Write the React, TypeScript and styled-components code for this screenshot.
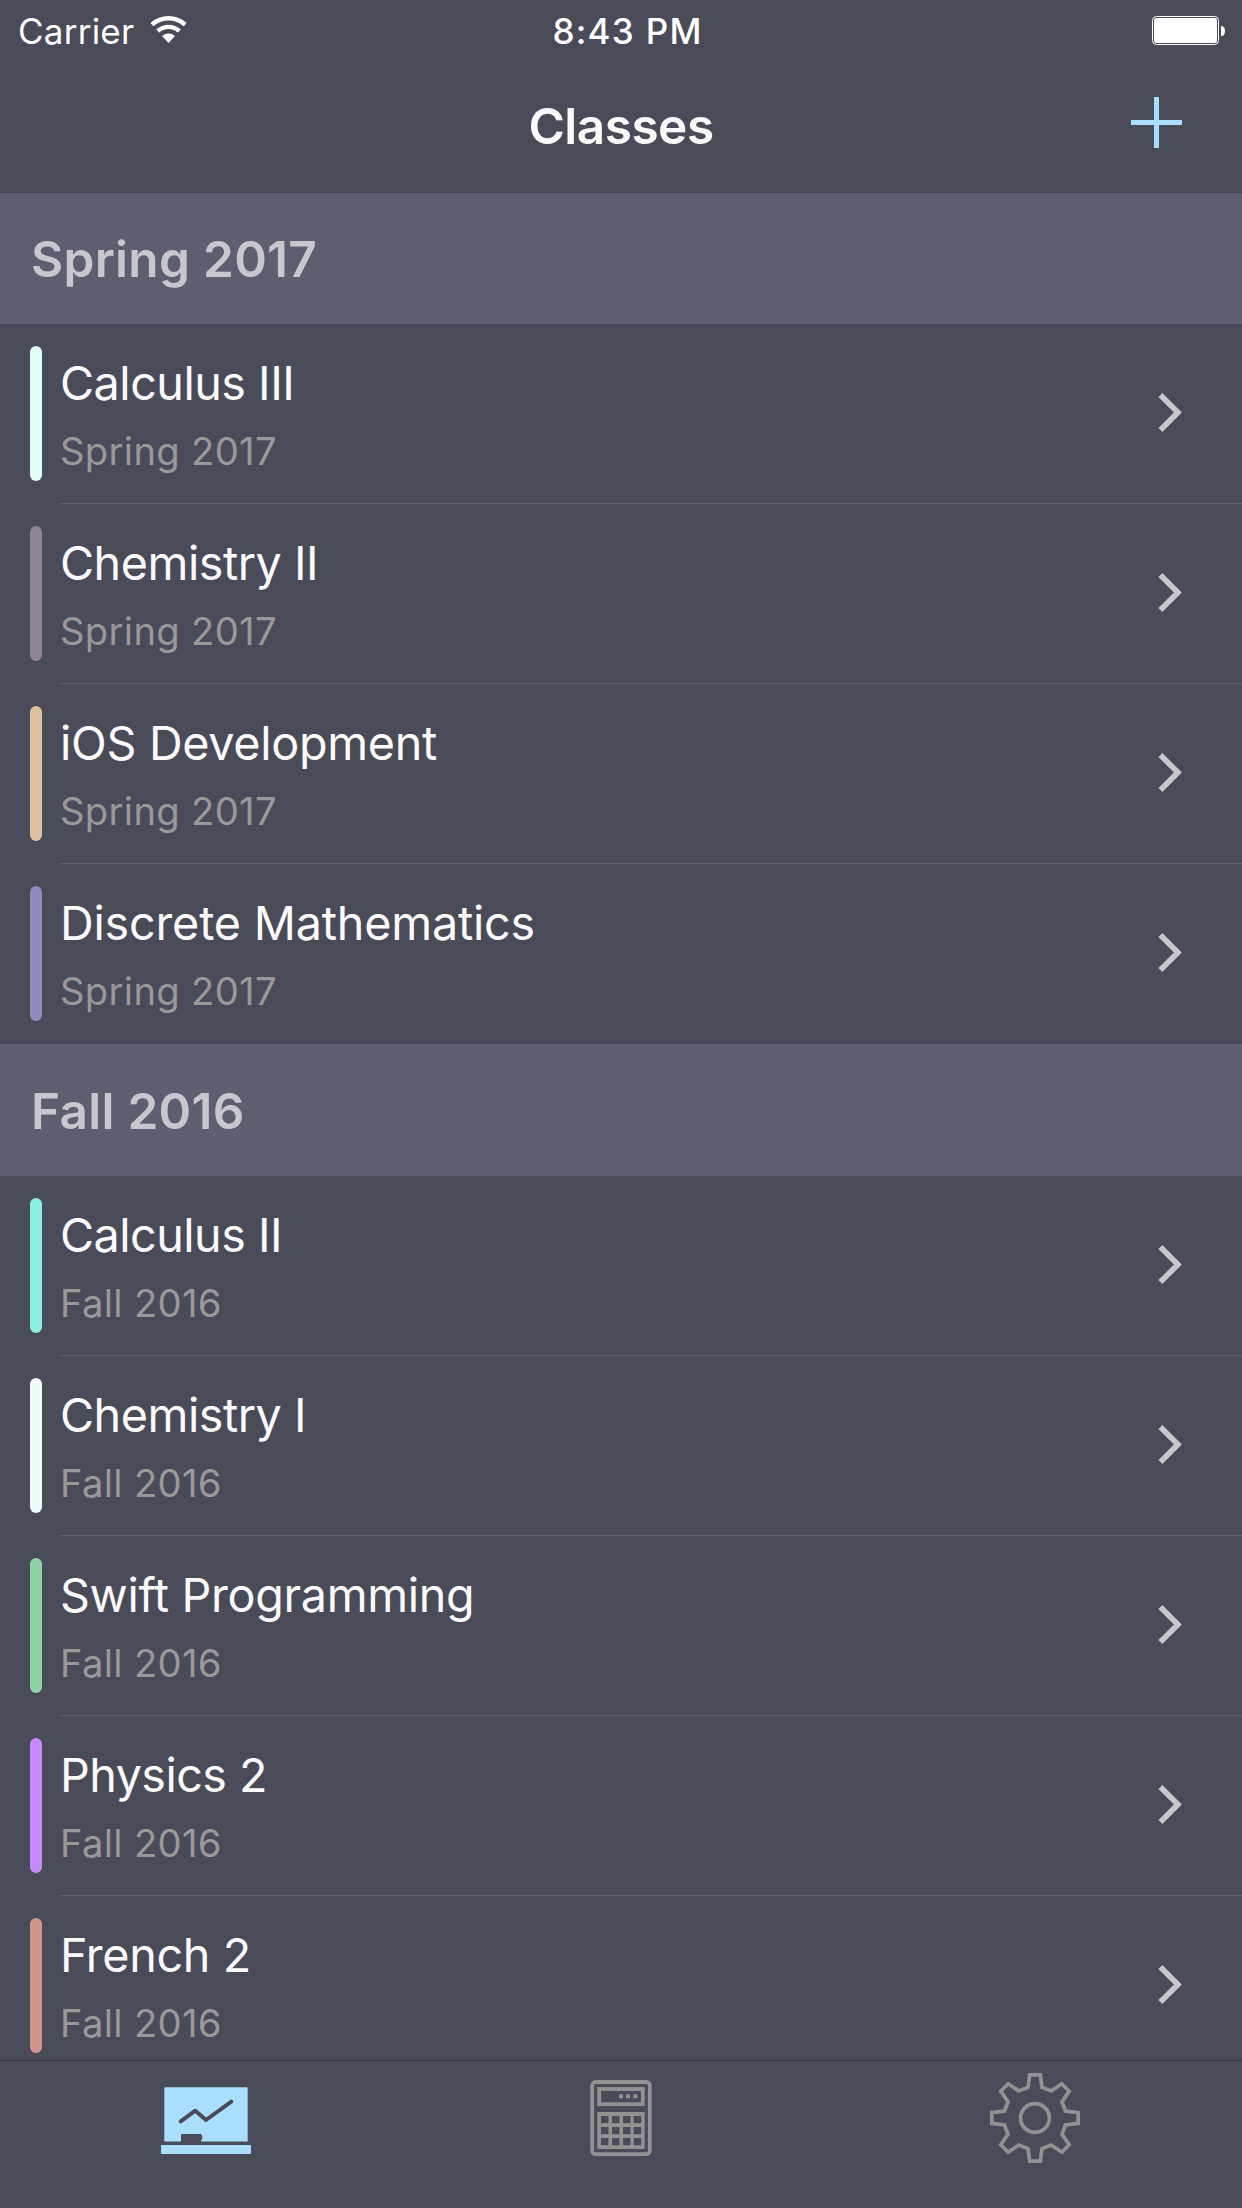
import React from "react";
import styled, { createGlobalStyle } from "styled-components";

const colors = {
  background: "#4a4b58",
  section: "#5d5e70",
  sectionText: "#c8c7ce",
  text: "#fafafa",
  muted: "#999999",
  separator: "#5e5f6e",
  chevron: "#c8c8cc",
  accent: "#a9dffc",
  inactive: "#929292",
};

const GlobalStyle = createGlobalStyle`
  *, *::before, *::after { box-sizing: border-box; }
  body { margin: 0; background: ${colors.background}; }
  svg { display: block; flex: none; }
`;

const Screen = styled.div`
  display: flex;
  flex-direction: column;
  width: 1242px;
  height: 2208px;
  overflow: hidden;
  background: ${colors.background};
  color: ${colors.text};
  font-family: Inter, "Liberation Sans", sans-serif;
`;

const StatusBar = styled.header`
  display: grid;
  grid-template-columns: 1fr auto 1fr;
  flex: none;
  height: 60px;
  padding: 0 17px 0 18px;
  color: #fff;
  font-size: 35px;
  line-height: 40px;
`;

const Carrier = styled.div`
  display: flex;
  gap: 14px;
  padding-top: 11px;
  letter-spacing: 0.24px;
`;

const WifiBox = styled.span`
  padding-top: 3px;
`;

const Clock = styled.time`
  padding: 11px 0 0 12px;
  font-weight: 500;
  letter-spacing: 1.28px;
`;

const Battery = styled.div`
  display: flex;
  justify-content: flex-end;
  padding-top: 16px;
`;

const NavBar = styled.nav`
  position: relative;
  display: grid;
  grid-template-columns: 1fr auto 1fr;
  flex: none;
  height: 133px;
  margin-bottom: -1px;
  padding-right: 60px;
  padding-left: 60px;
  border-bottom: 1px solid #444550;
`;

const NavTitle = styled.h1`
  grid-column: 2;
  margin: 0;
  padding-top: 36px;
  font-size: 49.5px;
  font-weight: 600;
  line-height: 60px;
  letter-spacing: -0.5px;
`;

const AddButton = styled.button`
  justify-self: end;
  align-self: start;
  margin-top: 37px;
  padding: 0;
  border: 0;
  background: none;
  color: ${colors.accent};
`;

const ClassList = styled.main`
  flex: 1;
  min-height: 0;
  overflow: hidden;
`;

const SectionHeader = styled.h2`
  height: 132px;
  margin: 0;
  padding: 37px 31px 0;
  background: ${colors.section};
  color: ${colors.sectionText};
  font-size: 49.5px;
  font-weight: 600;
  line-height: 60px;
  letter-spacing: 0.3px;
`;

const Rows = styled.ul`
  margin: 0;
  padding: 0;
  list-style: none;
`;

const Row = styled.li`
  display: flex;
  height: 180px;
  padding-left: 30px;
`;

const ColorBar = styled.span<{ $color: string }>`
  flex: none;
  width: 12px;
  height: 135px;
  margin: 22px 18px 0 0;
  border-radius: 6px;
  background: ${(p) => p.$color};
`;

const RowBody = styled.div<{ $divided: boolean }>`
  display: flex;
  flex: 1;
  justify-content: space-between;
  padding-right: 58px;
  border-bottom: 1px solid ${(p) => (p.$divided ? colors.separator : "transparent")};
`;

const RowText = styled.div`
  padding-top: 31px;
`;

const CourseName = styled.div<{ $tracking: number }>`
  font-size: 46.7px;
  line-height: 56px;
  letter-spacing: ${(p) => p.$tracking}px;
  white-space: nowrap;
`;

const CourseTerm = styled.div`
  margin-top: 17px;
  color: ${colors.muted};
  font-size: 38.2px;
  line-height: 46px;
  letter-spacing: 0.32px;
`;

const ChevronBox = styled.span`
  padding-top: 68px;
`;

const TabBar = styled.footer`
  display: grid;
  grid-template-columns: repeat(3, 1fr);
  flex: none;
  height: 148px;
  border-top: 1px solid #363742;
`;

const Tab = styled.button<{ $active?: boolean }>`
  display: flex;
  justify-content: center;
  padding: 7px 0 0;
  border: 0;
  background: none;
  color: ${(p) => (p.$active ? colors.accent : colors.inactive)};
`;

const WifiIcon = () => (
  <svg width="42" height="32" viewBox="0 0 42 32" fill="none" stroke="currentColor" strokeWidth="4.4">
    <path d="M3.9 10.6A24.8 24.8 0 0 1 37.1 10.6" />
    <path d="M9.7 17A16.2 16.2 0 0 1 31.3 17" />
    <path d="M20.5 29L14.1 21.9A9.5 9.5 0 0 1 26.9 21.9Z" fill="currentColor" stroke="none" />
  </svg>
);

const BatteryIcon = () => (
  <svg width="73" height="29" viewBox="0 0 73 29">
    <rect x="0.5" y="0.5" width="66" height="28" rx="4" fill="none" stroke="#fff" />
    <rect x="2" y="2" width="63" height="25" rx="2.5" fill="#fff" />
    <path d="M69 10C71.7 10 73 12 73 15S71.7 20 69 20Z" fill="#fff" />
  </svg>
);

const PlusIcon = () => (
  <svg width="51" height="51" viewBox="0 0 51 51" fill="currentColor">
    <path d="M23 0h5v23h23v5H28v23h-5V28H0v-5h23z" />
  </svg>
);

const ChevronIcon = () => (
  <svg width="26" height="41" viewBox="0 0 26 41" fill="none" stroke={colors.chevron} strokeWidth="5.6">
    <path d="M2.4 3L19.9 20.5L2.4 38" />
  </svg>
);

const BoardIcon = () => (
  <svg width="100" height="100" viewBox="17 28 100 100">
    <path
      fill="currentColor"
      d="M25.5 47.3H106.5Q107.7 47.3 107.7 48.5V101.6H61V100.2Q62.4 99.4 62.4 97.5Q62.4 95.6 61 94H41V101.6H24.3V48.5Q24.3 47.3 25.5 47.3Z"
    />
    <rect x="21" y="105" width="90" height="9" rx="1.2" fill="currentColor" />
    <path
      d="M40.7 81.3L55.3 70.7L66 80L91.3 61.7"
      fill="none"
      stroke={colors.background}
      strokeWidth="4"
      strokeLinecap="round"
      strokeLinejoin="round"
    />
  </svg>
);

const keyColumns = [31, 42, 53, 63.7];
const keyRows = [66, 77, 88];

const CalculatorIcon = () => (
  <svg width="100" height="100" viewBox="1 18 100 100">
    <g fill="none" stroke="currentColor" strokeWidth="3.8">
      <rect x="22.2" y="32" width="57.6" height="72.2" rx="3.5" />
      <rect x="29.2" y="39" width="43.6" height="15.2" />
    </g>
    {[51, 58, 65.3].map((x) => (
      <rect key={x} x={x - 2} y="44.3" width="4" height="4" fill="currentColor" />
    ))}
    <rect x="27.3" y="62" width="47.4" height="37" rx="1.2" fill="currentColor" />
    {keyRows.map((y) =>
      keyColumns.map((x) => (
        <rect key={`${x}-${y}`} x={x} y={y} width="7.5" height="7.2" fill={colors.background} />
      ))
    )}
  </svg>
);

const GearIcon = () => (
  <svg width="100" height="100" viewBox="-50 -50 100 100" fill="none" stroke="currentColor" strokeWidth="3.7">
    <path d="M-5.3-43.2H5.3L7-30.5L16.2-27L26.8-34.2L34.2-26.8L27-16.2L30.5-7L43.2-5.3V5.3L30.5 7L27 16.2L34.2 26.8L26.8 34.2L16.2 27L7 30.5L5.3 43.2H-5.3L-7 30.5L-16.2 27L-26.8 34.2L-34.2 26.8L-27 16.2L-30.5 7L-43.2 5.3V-5.3L-30.5-7L-27-16.2L-34.2-26.8L-26.8-34.2L-16.2-27L-7-30.5Z" />
    <circle r="14.4" />
  </svg>
);

type Course = { name: string; color: string; tracking: number };

const terms: { term: string; courses: Course[] }[] = [
  {
    term: "Spring 2017",
    courses: [
      { name: "Calculus III", color: "#dffff1", tracking: -0.5 },
      { name: "Chemistry II", color: "#8f8491", tracking: -0.48 },
      { name: "iOS Development", color: "#dfc0a0", tracking: -0.3 },
      { name: "Discrete Mathematics", color: "#8e8abd", tracking: -0.2 },
    ],
  },
  {
    term: "Fall 2016",
    courses: [
      { name: "Calculus II", color: "#8aefdf", tracking: -0.52 },
      { name: "Chemistry I", color: "#effaf9", tracking: -0.48 },
      { name: "Swift Programming", color: "#91d3a9", tracking: -0.33 },
      { name: "Physics 2", color: "#c78af8", tracking: -0.55 },
      { name: "French 2", color: "#d3958d", tracking: -0.34 },
    ],
  },
];

export default function App() {
  return (
    <Screen>
      <GlobalStyle />
      <StatusBar>
        <Carrier>
          Carrier
          <WifiBox>
            <WifiIcon />
          </WifiBox>
        </Carrier>
        <Clock>8:43 PM</Clock>
        <Battery>
          <BatteryIcon />
        </Battery>
      </StatusBar>
      <NavBar>
        <NavTitle>Classes</NavTitle>
        <AddButton aria-label="Add class">
          <PlusIcon />
        </AddButton>
      </NavBar>
      <ClassList>
        {terms.map(({ term, courses }) => (
          <section key={term}>
            <SectionHeader>{term}</SectionHeader>
            <Rows>
              {courses.map((course, i) => (
                <Row key={course.name}>
                  <ColorBar $color={course.color} />
                  <RowBody $divided={i < courses.length - 1}>
                    <RowText>
                      <CourseName $tracking={course.tracking}>{course.name}</CourseName>
                      <CourseTerm>{term}</CourseTerm>
                    </RowText>
                    <ChevronBox>
                      <ChevronIcon />
                    </ChevronBox>
                  </RowBody>
                </Row>
              ))}
            </Rows>
          </section>
        ))}
      </ClassList>
      <TabBar>
        <Tab $active aria-label="Classes">
          <BoardIcon />
        </Tab>
        <Tab aria-label="Calculator">
          <CalculatorIcon />
        </Tab>
        <Tab aria-label="Settings">
          <GearIcon />
        </Tab>
      </TabBar>
    </Screen>
  );
}
